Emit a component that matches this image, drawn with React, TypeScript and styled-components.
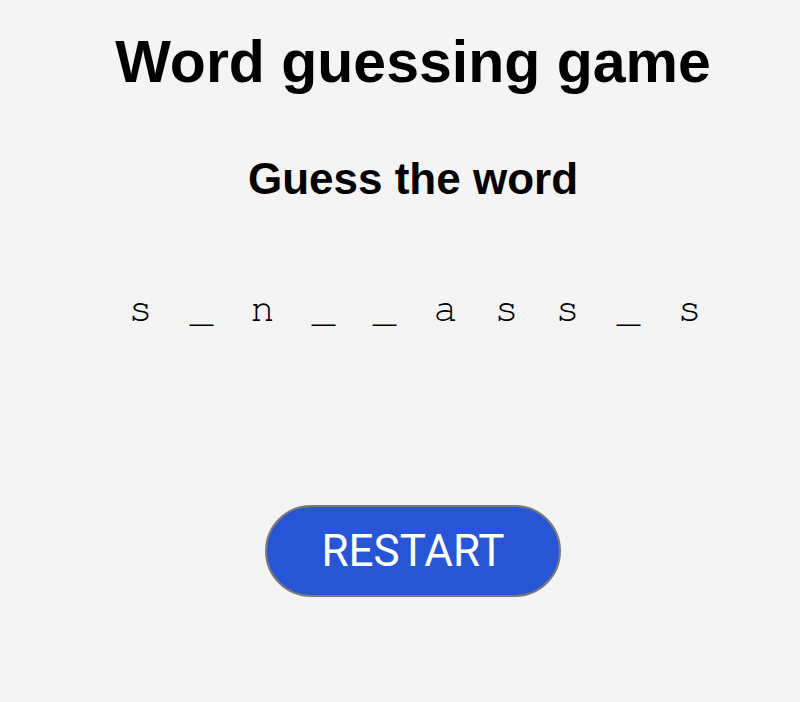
import React from "react";
import styled, { createGlobalStyle } from "styled-components";

const Global = createGlobalStyle`
  html, body { margin: 0; padding: 0; background: #f4f4f4; }
  body { font-family: "Liberation Sans", Arial, sans-serif; color: #000; }
`;

const Page = styled.main`
  display: flex;
  flex-direction: column;
  align-items: center;
  padding: 33px 0 0 26px;
`;

const Title = styled.h1`
  margin: 0;
  font-family: "Liberation Sans", Arial, sans-serif;
  font-weight: 700;
  font-size: 59px;
  line-height: 1;
`;

const Subtitle = styled.h2`
  margin: 65px 0 0;
  font-family: "Liberation Sans", Arial, sans-serif;
  font-weight: 700;
  font-size: 44px;
  line-height: 1;
`;

const Word = styled.div`
  display: flex;
  gap: 37px;
  margin-top: 88px;
  padding-left: 4px;
  font-family: "Nimbus Mono PS", "Nimbus Mono L", FreeMono, "Courier New", Courier, "Liberation Mono", monospace;
  font-size: 40px;
  line-height: 1;
`;

const Letter = styled.span`
  display: inline-block;
`;

const RestartButton = styled.button`
  margin-top: 176px;
  width: 296px;
  height: 92px;
  border-radius: 46px;
  border: 2px solid #7a7a7a;
  background: #2855d6;
  color: #fff;
  font-family: Roboto, "Liberation Sans", sans-serif;
  font-size: 44px;
  cursor: pointer;
`;

const letters = ["s", "_", "n", "_", "_", "a", "s", "s", "_", "s"];

export default function App() {
  return (
    <>
      <Global />
      <Page>
        <Title>Word guessing game</Title>
        <Subtitle>Guess the word</Subtitle>
        <Word>
          {letters.map((l, i) => (
            <Letter key={i}>{l}</Letter>
          ))}
        </Word>
        <RestartButton>RESTART</RestartButton>
      </Page>
    </>
  );
}
